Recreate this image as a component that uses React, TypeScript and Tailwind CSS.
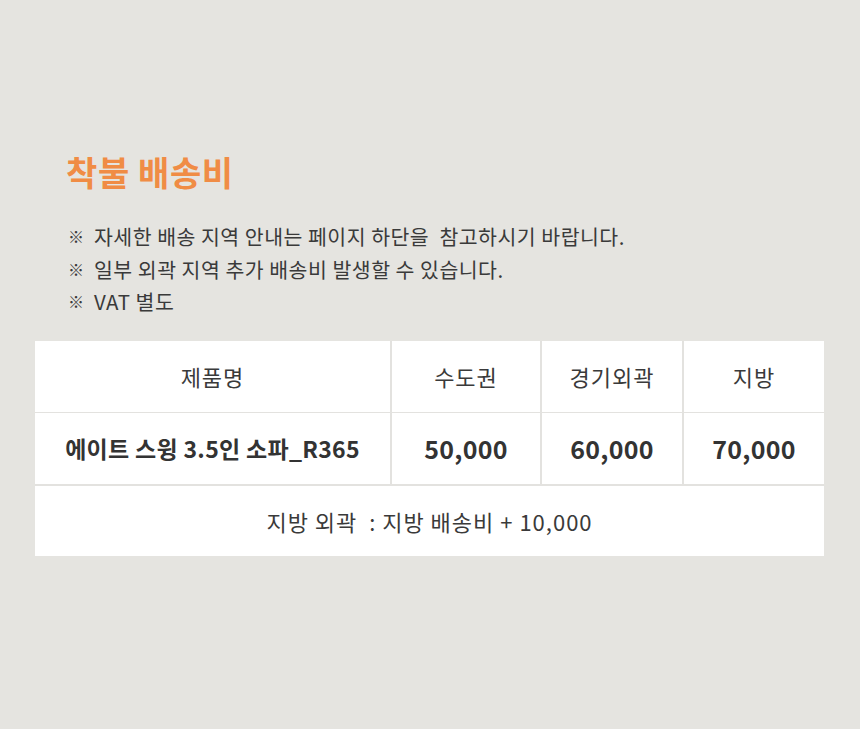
const notes = [
  "자세한 배송 지역 안내는 페이지 하단을  참고하시기 바랍니다.",
  "일부 외곽 지역 추가 배송비 발생할 수 있습니다.",
  "VAT 별도",
];

const heads = ["수도권", "경기외곽", "지방"];
const prices = ["50,000", "60,000", "70,000"];

export default function App() {
  return (
    <div
      className="w-[860px] h-[729px] bg-[#e5e4e0] text-[#333] pt-[150px] px-[35px]"
      style={{ fontFamily: '"Noto Sans CJK KR", "Noto Sans", sans-serif' }}
    >
      <h1 className="pl-[31px] text-[34px] font-bold leading-[44px] text-[#f08c45] tracking-[0.6px]">
        착불 배송비
      </h1>

      <ul className="mt-[29px] pl-[33px] space-y-[6.5px]">
        {notes.map((n) => (
          <li key={n} className="flex items-center text-[20.5px] leading-[26px] tracking-[0.5px] text-[#3a3a3a]">
            <span className="w-[26px] text-[16px] font-bold">※</span>
            <span className="whitespace-pre">{n}</span>
          </li>
        ))}
      </ul>

      <div className="mt-[27px] w-[789px] bg-white">
        <div className="grid grid-cols-[355px_150px_142px_142px] h-[72px] border-b border-[#e3e2df]">
          <div className="flex items-center justify-center text-[22px] tracking-[1px] text-[#3a3a3a]">제품명</div>
          {heads.map((h) => (
            <div
              key={h}
              className="flex items-center justify-center border-l-2 border-[#e3e2df] text-[22px] tracking-[1px] text-[#3a3a3a]"
            >
              {h}
            </div>
          ))}
        </div>
        <div className="grid grid-cols-[355px_150px_142px_142px] h-[73px] border-b-2 border-[#e3e2df]">
          <div className="flex items-center justify-center text-[23px] font-bold tracking-[0.3px] text-[#333]">
            에이트 스윙 3.5인 소파_R365
          </div>
          {prices.map((p) => (
            <div
              key={p}
              className="flex items-center justify-center border-l-2 border-[#e3e2df] text-[25px] font-bold tracking-[0.3px] text-[#333]"
            >
              {p}
            </div>
          ))}
        </div>
        <div className="h-[70px] flex items-center justify-center text-[22px] tracking-[1px] text-[#3a3a3a] whitespace-pre">
          지방 외곽  : 지방 배송비 + 10,000
        </div>
      </div>
    </div>
  );
}
